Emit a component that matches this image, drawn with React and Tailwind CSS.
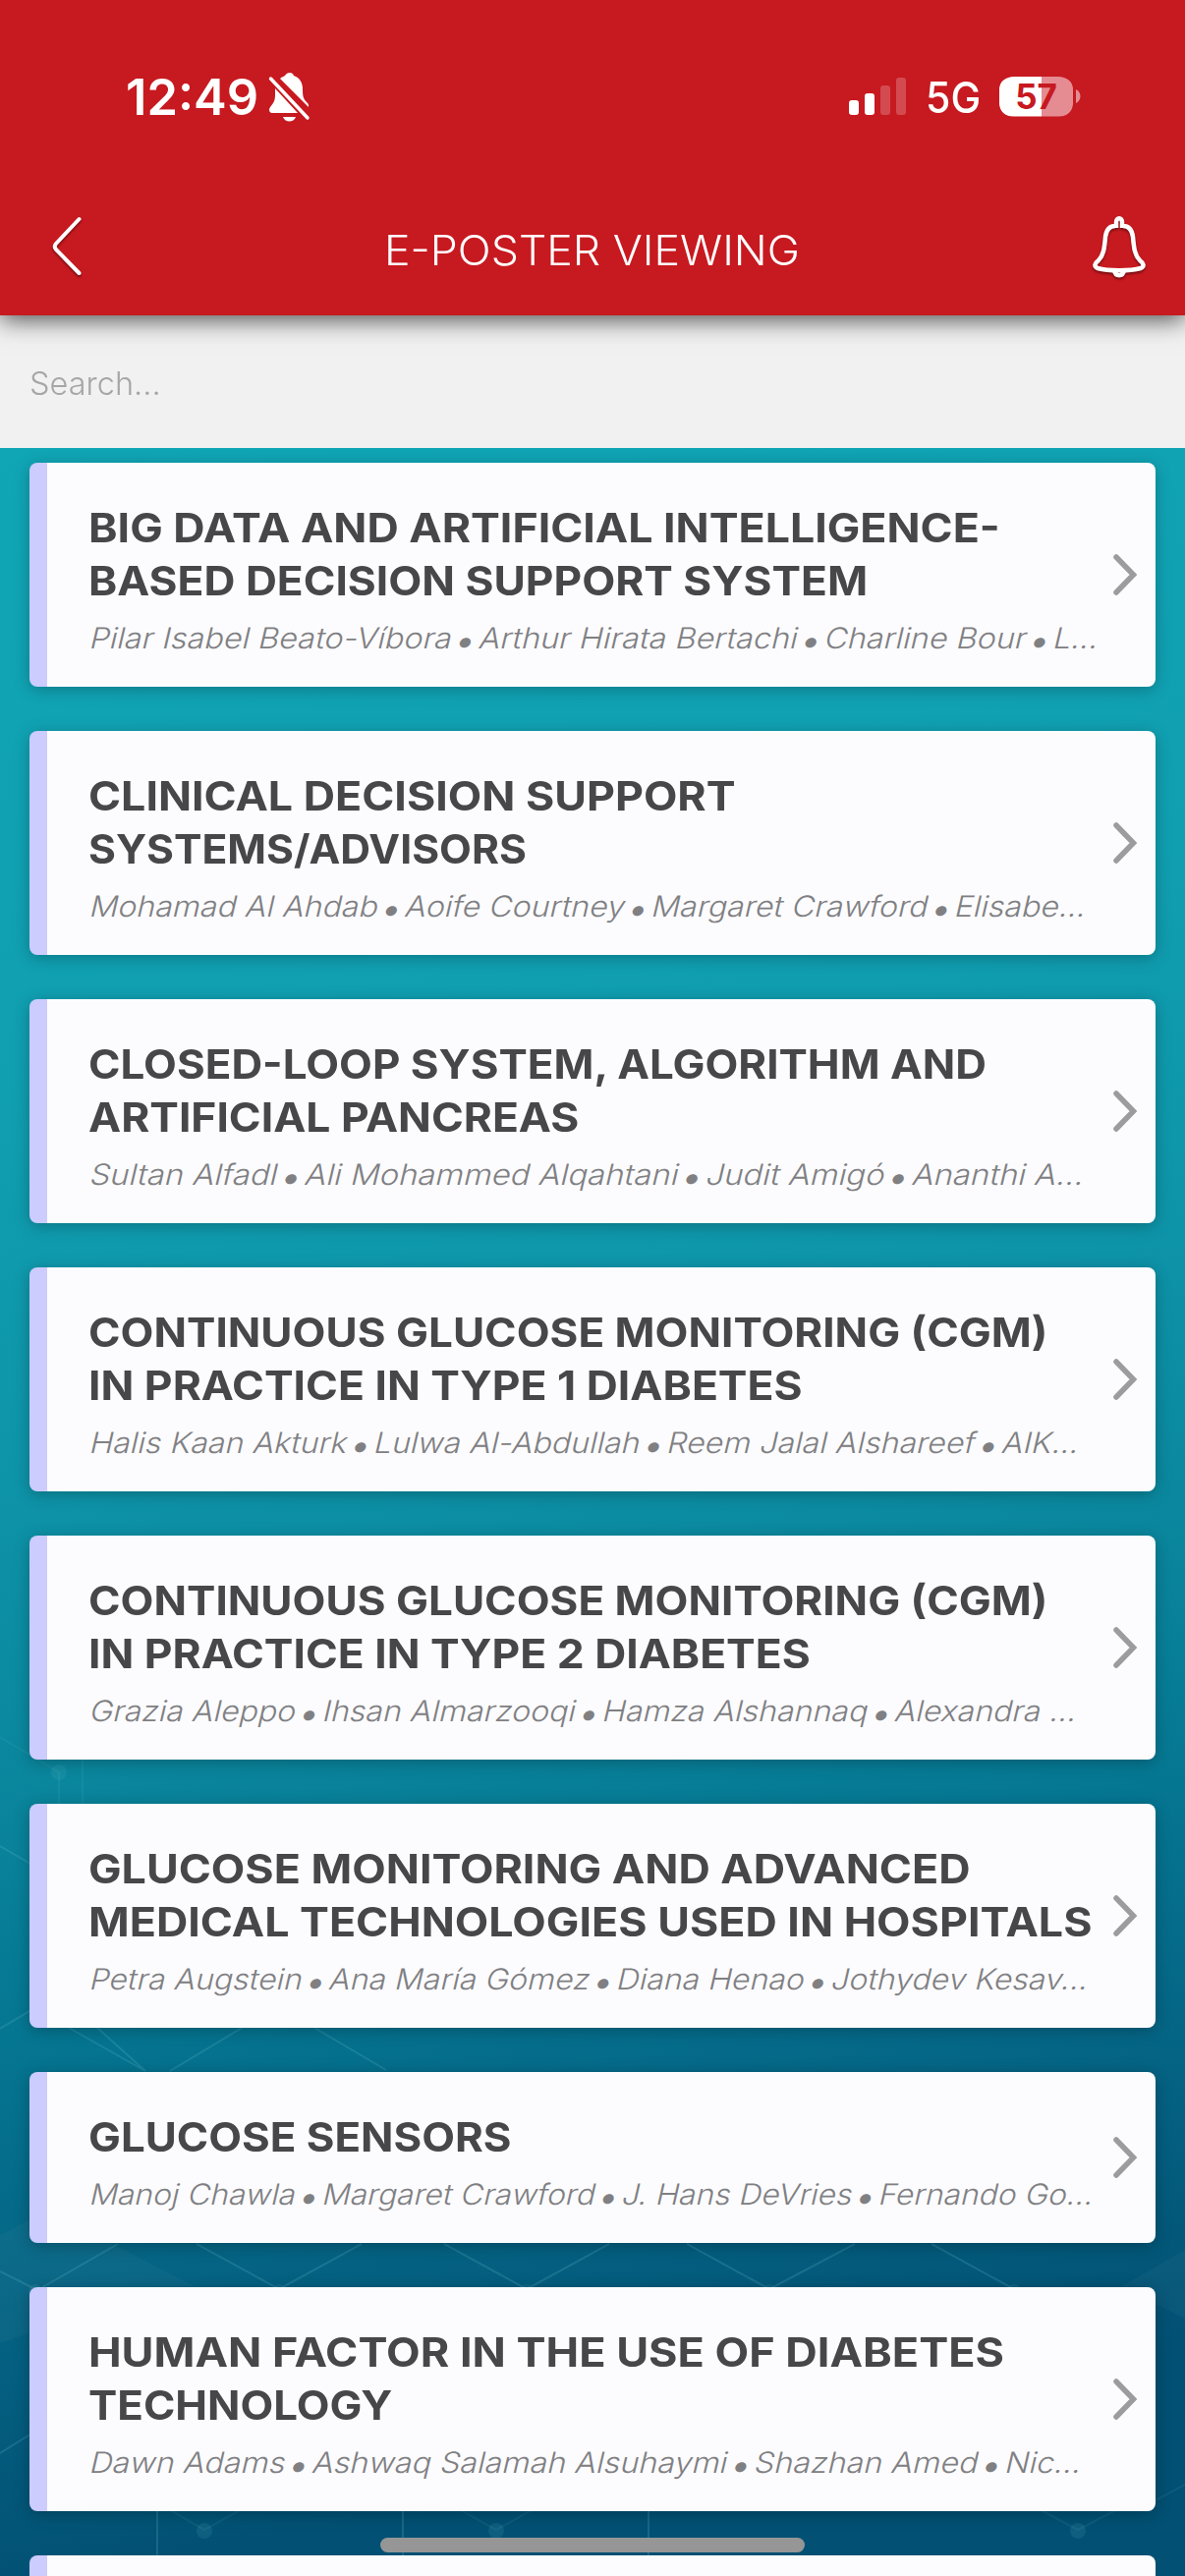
import React, { useLayoutEffect, useRef } from "react";

const POSTERS = [
  {
    lines: [
      ["BIG DATA AND ARTIFICIAL INTELLIGENCE-", 928],
      ["BASED DECISION SUPPORT SYSTEM", 793],
    ],
    authors: ["Pilar Isabel Beato-Víbora • Arthur Hirata Bertachi • Charline Bour • L...", 1026],
  },
  {
    lines: [
      ["CLINICAL DECISION SUPPORT", 659],
      ["SYSTEMS/ADVISORS", 446],
    ],
    authors: ["Mohamad Al Ahdab • Aoife Courtney • Margaret Crawford • Elisabe...", 1014],
  },
  {
    lines: [
      ["CLOSED-LOOP SYSTEM, ALGORITHM AND", 914],
      ["ARTIFICIAL PANCREAS", 499],
    ],
    authors: ["Sultan Alfadl • Ali Mohammed Alqahtani • Judit Amigó • Ananthi A...", 1012],
  },
  {
    lines: [
      ["CONTINUOUS GLUCOSE MONITORING (CGM)", 976],
      ["IN PRACTICE IN TYPE 1 DIABETES", 727],
    ],
    authors: ["Halis Kaan Akturk • Lulwa Al-Abdullah • Reem Jalal Alshareef • AIK...", 1007],
  },
  {
    lines: [
      ["CONTINUOUS GLUCOSE MONITORING (CGM)", 976],
      ["IN PRACTICE IN TYPE 2 DIABETES", 735],
    ],
    authors: ["Grazia Aleppo • Ihsan Almarzooqi • Hamza Alshannaq • Alexandra ...", 1004],
  },
  {
    lines: [
      ["GLUCOSE MONITORING AND ADVANCED", 898],
      ["MEDICAL TECHNOLOGIES USED IN HOSPITALS", 1021],
    ],
    authors: ["Petra Augstein • Ana María Gómez • Diana Henao • Jothydev Kesav...", 1016],
  },
  {
    lines: [["GLUCOSE SENSORS", 431]],
    authors: ["Manoj Chawla • Margaret Crawford • J. Hans DeVries • Fernando Go...", 1021],
  },
  {
    lines: [
      ["HUMAN FACTOR IN THE USE OF DIABETES", 932],
      ["TECHNOLOGY", 309],
    ],
    authors: ["Dawn Adams • Ashwaq Salamah Alsuhaymi • Shazhan Amed • Nic...", 1009],
  },
];

// Stretches one line of text so that it fills the given width
const FitText = ({ text, width, slant = 0 }) => {
  const ref = useRef(null);

  useLayoutEffect(() => {
    const el = ref.current;
    const fit = () => {
      el.style.transform = `scaleX(${width / el.offsetWidth}) skewX(-${slant}deg)`;
    };
    fit();
    document.fonts?.ready.then(fit);
  }, [text, width, slant]);

  return (
    <span className="inline-block" style={{ width }}>
      <span ref={ref} className="inline-block origin-[0_72%] whitespace-pre">
        {text.split(" • ").map((part, index) => (
          <React.Fragment key={index}>
            {index > 0 && (
              <span className="relative top-[5px] -mx-[2px] text-[37px] leading-[0]">
                <span className="text-[15px]"> </span>•
                <span className="text-[15px]"> </span>
              </span>
            )}
            {part}
          </React.Fragment>
        ))}
      </span>
    </span>
  );
};

const StatusBar = () => (
  <div className="flex h-[198px] items-start justify-between pl-[128px] pr-[106px] text-white">
    <div className="flex h-[66px] items-center pt-[65px] box-content">
      <span className="text-[51px] leading-none font-semibold">
        <FitText text="12:49" width={135} />
      </span>
      <svg className="ml-[9px] h-[52px] w-[44px]" viewBox="0 0 44 52">
        <path
          fill="currentColor"
          d="M13 8c2-2 4-2 5-3 2-4 8-4 9 0 6 2 9 7 9 14 0 8 1 10 5 14 1 1 1 2 1 4zM8 18 31 43H6c-4 0-5-3-3-6 4-5 5-7 5-13zM16 47h13c-2 6-11 6-13 0z"
        />
        <path d="M3.500 8 41 48" stroke="currentColor" strokeWidth="3.500" strokeLinecap="round" />
      </svg>
    </div>
    <div className="flex h-[66px] items-center pt-[65px] box-content">
      <svg className="h-[38px] w-[58px]" viewBox="0 0 58 38" fill="currentColor">
        <rect x="0" y="23" width="10" height="15" rx="3" />
        <rect x="16" y="16" width="10" height="22" rx="3" />
        <rect x="32" y="8" width="10" height="30" rx="3" opacity=".22" />
        <rect x="48" y="0" width="10" height="38" rx="3" opacity=".22" />
      </svg>
      <span className="ml-[20px] mt-[1px] text-[44px] leading-none font-medium">
        <FitText text="5G" width={56} />
      </span>
      <div className="ml-[19px] flex h-[47px] w-[75px] items-center justify-center rounded-[15px] bg-[linear-gradient(to_right,#fff_57%,#e48c92_57%)] bg-clip-content py-[3px] text-[35px] leading-none font-bold text-[#c71920] [clip-path:inset(3px_0_round_13px)]">
        57
      </div>
      <svg className="ml-[3px] h-[14px] w-[5px]" viewBox="0 0 5 14">
        <path d="M0 0c6 3 6 11 0 14z" fill="#e48c92" />
      </svg>
    </div>
  </div>
);

const Header = () => (
  <header className="relative z-10 h-[321px] bg-[#c71920] text-white shadow-[0_4px_24px_rgba(0,0,0,0.7)]">
    <StatusBar />
    <div className="flex h-[108px] items-center justify-between pl-[52px] pr-[40px]">
      <svg
        className="h-[70px] w-[32px] drop-shadow-[0_2px_1px_rgba(0,0,0,0.4)]"
        viewBox="0 0 32 70"
        fill="none"
        stroke="currentColor"
        strokeWidth="4"
        strokeLinecap="round"
      >
        <path d="M28.500 6 5 31q-2.500 3 0 6L28.500 61" />
      </svg>
      <h1 className="ml-[8px] mt-[5px] text-[42px] leading-none font-light">
        <FitText text="E-POSTER VIEWING" width={423} />
      </h1>
      <svg
        className="h-[66px] w-[54px] drop-shadow-[0_2px_1px_rgba(0,0,0,0.4)]"
        viewBox="0 0 54 66"
        fill="none"
        stroke="currentColor"
        strokeWidth="4.500"
        strokeLinejoin="round"
      >
        <path d="M23 11c-6 0-9 4-10 11-1 12-2 19-7 24-4 3-5 6-1 8 11 3 33 3 44 0 4-2 3-5-1-8-5-5-6-12-7-24-1-7-4-11-10-11M24 13V7c0-5 6-5 6 0v6M22 56c1 7 9 7 10 0" />
      </svg>
    </div>
  </header>
);

const Backdrop = () => (
  <svg
    className="absolute inset-0 h-full w-full"
    viewBox="0 456 1206 2166"
    preserveAspectRatio="none"
  >
    <defs>
      <linearGradient id="sea" x1="0" y1="0" x2="0.12" y2="1">
        <stop offset="0" stopColor="#10a6b6" />
        <stop offset=".3" stopColor="#109fb1" />
        <stop offset=".477" stopColor="#0e94a9" />
        <stop offset=".62" stopColor="#0a869d" />
        <stop offset=".745" stopColor="#057591" />
        <stop offset=".85" stopColor="#056585" />
        <stop offset="1" stopColor="#025073" />
      </linearGradient>
    </defs>
    <rect y="456" width="1206" height="2166" fill="url(#sea)" />
    {/* Hexagonal mesh */}
    <g fill="#fff" fillOpacity=".03">
      <path d="M0 2275 48 2250 200 2328 100 2350 0 2385z" />
      <path d="M1206 2290 1140 2328 1206 2360z" />
    </g>
    <g fill="none" stroke="#6cc3d2" strokeOpacity=".2" strokeWidth="2">
      <path d="M0 1879l45 26M0 2065l60-36 88 79M148 2108 70 2064M173 2108l100-60M320 2064l73 43" />
      <path d="M0 2312l38 19 82-47M200 2284l84 46 84-46M452 2284l84 46 84-46M699 2284l84 46 87-46M948 2284l84 46M0 2497l45-28" />
      <path d="M160 2550v60M410 2550v60M660 2550v60" />
    </g>
    <g fill="none" stroke="#6cc3d2" strokeOpacity=".1" strokeWidth="2">
      <path d="M0 1768 60 1804V1842M165 2550l43 25 45-25M460 2550l45 25 45-25M1050 2550l47 25 48-25M1176 2545l30-16M84 1780v60" />
    </g>
    <g fill="#6cc3d2" fillOpacity=".12">
      <circle cx="60" cy="1804" r="8" />
      <circle cx="208" cy="2576" r="8" />
      <circle cx="505" cy="2576" r="8" />
      <circle cx="1097" cy="2576" r="8" />
      <circle cx="36" cy="2332" r="7" />
      <circle cx="284" cy="2332" r="7" />
      <circle cx="536" cy="2332" r="7" />
      <circle cx="783" cy="2332" r="7" />
      <circle cx="1032" cy="2332" r="7" />
    </g>
  </svg>
);

const PosterCard = ({ lines, authors }) => (
  <article className="flex items-center justify-between rounded-[8px] border-l-[18px] border-[#ccccff] bg-[#fcfcfe] pt-[39px] pb-[26px] pl-[42px] pr-[17px] shadow-[0_3px_16px_rgba(0,0,0,0.25)]">
    <div>
      <h2 className="text-[41px] leading-[54px] font-bold text-[#474749]">
        {lines.map(([text, width]) => (
          <div key={text} className="h-[54px]">
            <FitText text={text} width={width} />
          </div>
        ))}
      </h2>
      <p className="mt-[7px] h-[48px] text-[29.500px] leading-[48px] font-light text-[#808083]">
        <FitText text={authors[0]} width={authors[1]} slant={12} />
      </p>
    </div>
    <svg
      className="-mt-[14px] h-[44px] w-[28px] flex-shrink-0"
      viewBox="0 0 28 44"
      fill="none"
      stroke="#9c9c9e"
      strokeWidth="5.500"
      strokeLinecap="round"
    >
      <path d="M5 4 22.500 22 5 40" />
    </svg>
  </article>
);

export default function App() {
  return (
    <div className="relative flex h-[2622px] w-[1206px] flex-col overflow-hidden font-['Inter','Liberation_Sans',sans-serif]">
      <Header />
      <div className="flex h-[135px] flex-shrink-0 items-center bg-[#f1f1f1] pt-[4px] pl-[30px] text-[33px] font-light text-[#a6a6a6]">
        <FitText text="Search..." width={134} />
      </div>
      <main className="relative flex-1 overflow-hidden">
        <Backdrop />
        <div className="relative flex flex-col gap-[45px] px-[30px] pt-[15px]">
          {POSTERS.map((poster, index) => (
            <PosterCard key={index} {...poster} />
          ))}
          <div className="h-[60px] rounded-[8px] border-l-[18px] border-[#ccccff] bg-[#fcfcfe]" />
        </div>
      </main>
      {/* Home indicator */}
      <div className="absolute bottom-[24px] left-[387px] h-[15px] w-[432px] rounded-full bg-[#969697]" />
    </div>
  );
}
